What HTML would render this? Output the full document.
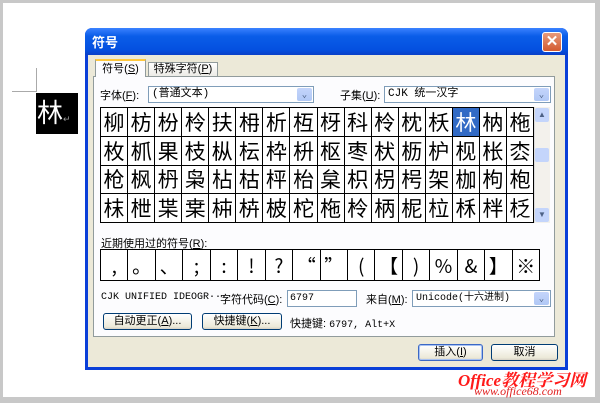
<!DOCTYPE html>
<html><head><meta charset="utf-8"><style>
*{margin:0;padding:0;box-sizing:border-box}
body{width:600px;height:403px;background:#fff;position:relative;overflow:hidden;font-family:"Liberation Sans","Noto Sans CJK SC",sans-serif;font-size:11px;color:#000}
.a{position:absolute}
.cjk{font-family:"Liberation Sans","Noto Sans CJK SC",sans-serif}
.mono{font-family:"Liberation Mono","Noto Sans CJK SC",monospace}
.combo{background:#fff;border:1px solid #7f9db9}
.dd{position:absolute;right:1px;top:1px;width:15px;bottom:1px;background:linear-gradient(#c4d5fb,#b0c8f5);border-radius:2px;color:#4d6185;font-size:9px;text-align:center;line-height:14px}
.btn{border:1px solid #003c74;border-radius:3px;background:linear-gradient(#fff,#ece9d8 85%,#d6d0c5);text-align:center;line-height:15px}
.grid{border-collapse:collapse;background:#fff;table-layout:fixed}
.grid td{border:1px solid #000;text-align:center;font-family:"Noto Sans CJK SC",sans-serif;padding:0;overflow:hidden}
</style></head><body>
<div class="a" style="left:0;top:0;width:600px;height:403px;border:3px solid #c8c8c8;border-right-width:5px;border-bottom-width:6px"></div>
<div class="a" style="left:36px;top:68px;width:1px;height:24px;background:#aaa"></div>
<div class="a" style="left:12px;top:91px;width:24px;height:1px;background:#aaa"></div>
<div class="a cjk" style="left:36px;top:93px;width:42px;height:41px;background:#000;color:#fff;font-size:26px;line-height:40px;padding-left:1px">林<span style="font-size:9px;color:#999">↵</span></div>

<div class="a" style="left:85px;top:28px;width:483px;height:342px;background:#0a3fd8;border-radius:7px 7px 0 0"></div>
<div class="a" style="left:85px;top:28px;width:483px;height:27px;background:linear-gradient(#3b82ff,#0a5de8 30%,#0450e0 80%,#0a3fc8);border-radius:7px 7px 0 0"></div>
<div class="a cjk" style="left:92px;top:32px;color:#fff;font-size:13px;font-weight:bold">符号</div>
<div class="a" style="left:542px;top:32px;width:20px;height:20px;background:linear-gradient(#e89a7c,#d35a30);border:1px solid #fff;border-radius:3px;color:#fff;text-align:center;font-size:15px;line-height:18px;font-weight:bold">✕</div>
<div class="a" style="left:88px;top:55px;width:477px;height:312px;background:#ece9d8"></div>

<div class="a" style="left:93px;top:76px;width:462px;height:261px;background:#fcfcfe;border:1px solid #919b9c"></div>
<div class="a cjk" style="left:95px;top:59px;width:51px;height:18px;background:#fcfcfe;border:1px solid #919b9c;border-bottom:none;border-top:2px solid #ffc83c;text-align:center;line-height:16px">符号(<u>S</u>)</div>
<div class="a cjk" style="left:148px;top:62px;width:70px;height:15px;background:linear-gradient(#fff,#ecebe6);border:1px solid #919b9c;text-align:center;line-height:13px">特殊字符(<u>P</u>)</div>

<div class="a cjk" style="left:100px;top:87px">字体(<u>F</u>):</div>
<div class="a combo mono" style="left:148px;top:86px;width:166px;height:17px;padding-left:3px;line-height:15px">(普通文本)<div class="dd">⌄</div></div>
<div class="a cjk" style="left:340px;top:87px">子集(<u>U</u>):</div>
<div class="a combo mono" style="left:384px;top:86px;width:167px;height:17px;padding-left:3px;line-height:15px">CJK 统一汉字<div class="dd">⌄</div></div>

<table class="a grid" style="left:100px;top:107px;width:434px;height:116px;font-size:21px;line-height:26px">
<tr><td>柳</td><td>枋</td><td>枌</td><td>柃</td><td>扶</td><td>枏</td><td>析</td><td>枑</td><td>枒</td><td>科</td><td>柃</td><td>枕</td><td>枖</td><td style="background:#316ac5;color:#fff">林</td><td>枘</td><td>柂</td></tr>
<tr><td>枚</td><td>枛</td><td>果</td><td>枝</td><td>枞</td><td>枟</td><td>枠</td><td>枡</td><td>枢</td><td>枣</td><td>枤</td><td>枥</td><td>枦</td><td>枧</td><td>枨</td><td>枩</td></tr>
<tr><td>枪</td><td>枫</td><td>枬</td><td>枭</td><td>枮</td><td>枯</td><td>枰</td><td>枱</td><td>枲</td><td>枳</td><td>枴</td><td>枵</td><td>架</td><td>枷</td><td>枸</td><td>枹</td></tr>
<tr><td>枺</td><td>枻</td><td>枼</td><td>枽</td><td>枾</td><td>枿</td><td>柀</td><td>柁</td><td>柂</td><td>柃</td><td>柄</td><td>柅</td><td>柆</td><td>柇</td><td>柈</td><td>柉</td></tr>
</table>
<div class="a" style="left:534px;top:107px;width:16px;height:116px;background:#f3f1ec;border-left:1px solid #ddd"></div>
<div class="a" style="left:535px;top:108px;width:14px;height:14px;background:#c4d5fb;border-radius:2px;font-size:8px;color:#4d6185;text-align:center;line-height:14px">▲</div>
<div class="a" style="left:535px;top:148px;width:14px;height:14px;background:#c4d5fb;border-radius:2px"></div>
<div class="a" style="left:535px;top:208px;width:14px;height:14px;background:#c4d5fb;border-radius:2px;font-size:8px;color:#4d6185;text-align:center;line-height:14px">▼</div>

<div class="a cjk" style="left:101px;top:235px">近期使用过的符号(<u>R</u>):</div>
<table class="a grid" style="left:100px;top:249px;width:440px;height:32px;font-size:19px">
<tr><td>,</td><td>。</td><td>、</td><td>;</td><td>:</td><td>!</td><td>?</td><td>“</td><td>”</td><td>(</td><td>【</td><td>)</td><td>%</td><td>&amp;</td><td>】</td><td>※</td></tr>
</table>

<div class="a mono" style="left:101px;top:292px;font-size:10px">CJK UNIFIED IDEOGR···</div>
<div class="a cjk" style="left:220px;top:291px">字符代码(<u>C</u>):</div>
<div class="a combo mono" style="left:287px;top:290px;width:70px;height:17px;padding-left:2px;line-height:15px;font-size:10px">6797</div>
<div class="a cjk" style="left:366px;top:291px">来自(<u>M</u>):</div>
<div class="a combo mono" style="left:412px;top:290px;width:139px;height:17px;padding-left:3px;line-height:15px;font-size:10px">Unicode(十六进制)<div class="dd">⌄</div></div>

<div class="a btn cjk" style="left:103px;top:313px;width:89px;height:17px">自动更正(<u>A</u>)...</div>
<div class="a btn cjk" style="left:202px;top:313px;width:80px;height:17px">快捷键(<u>K</u>)...</div>
<div class="a cjk" style="left:290px;top:315px">快捷键: <span class="mono" style="font-size:10px">6797, Alt+X</span></div>

<div class="a btn cjk" style="left:418px;top:344px;width:65px;height:17px;border-color:#3b68c5;box-shadow:inset 0 0 0 1px #a7c1f2">插入(<u>I</u>)</div>
<div class="a btn cjk" style="left:491px;top:344px;width:67px;height:17px">取消</div>

<div class="a" style="left:458px;top:366px;color:#ff1a1a;font-family:'Liberation Serif','Noto Serif CJK SC',serif;font-style:italic;font-weight:bold;font-size:17px;text-shadow:1px 1px 0 #fff">Office教程学习网</div>
<div class="a" style="left:474px;top:384px;color:#e02020;font-family:'Liberation Serif',serif;font-style:italic;font-size:12px">www.office68.com</div>
</body></html>
